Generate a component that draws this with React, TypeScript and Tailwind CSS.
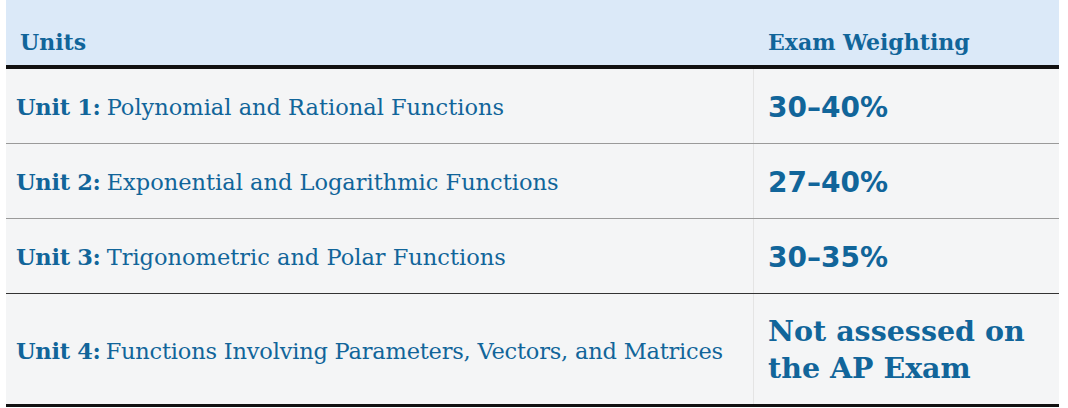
const ROWS: { unit: string; title: string; weight: string }[] = [
  { unit: "Unit 1:", title: "Polynomial and Rational Functions", weight: "30–40%" },
  { unit: "Unit 2:", title: "Exponential and Logarithmic Functions", weight: "27–40%" },
  { unit: "Unit 3:", title: "Trigonometric and Polar Functions", weight: "30–35%" },
];

export default function App() {
  return (
    <div className="w-[1068px] h-[408px] bg-white pl-[6px] pr-[9px] font-['DejaVu_Serif',serif] text-[#11659a]">
      {/* header */}
      <div className="grid grid-cols-[748px_1fr] h-[69px] bg-[#dbe9f8] border-b-[4px] border-[#111]">
        <div className="flex items-end pb-[6px] pl-[14px] text-[22px] font-bold">Units</div>
        <div className="flex items-end pb-[6px] pl-[14px] text-[22px] font-bold">Exam Weighting</div>
      </div>

      {ROWS.map((r) => (
        <div key={r.unit} className="grid grid-cols-[748px_1fr] h-[75px] bg-[#f4f5f6] border-b border-[#9a9a9a]">
          <div className="flex items-center pt-[3px] pl-[10px] text-[22.5px] border-r border-[#e4e4e4]">
            <span className="font-bold mr-[6px] tracking-[-0.3px]">{r.unit}</span>
            <span>{r.title}</span>
          </div>
          <div className="flex items-center pt-[3px] pl-[14px] text-[28px] font-bold font-['DejaVu_Sans',sans-serif]">
            {r.weight}
          </div>
        </div>
      ))}

      <div className="grid grid-cols-[748px_1fr] h-[114px] bg-[#f4f5f6] border-t border-[#333] -mt-px border-b-[3px] border-b-[#111]">
        <div className="flex items-center pt-[6px] pl-[10px] text-[22.5px] border-r border-[#e4e4e4]">
          <span className="font-bold mr-[5px] tracking-[-0.3px]">Unit 4:</span>
          <span className="tracking-[-0.2px]">Functions Involving Parameters, Vectors, and Matrices</span>
        </div>
        <div className="flex items-center pt-[2px] pl-[14px] text-[28.5px] leading-[37px] font-bold">
          <span>
            Not assessed on
            <br />
            the AP Exam
          </span>
        </div>
      </div>
    </div>
  );
}
